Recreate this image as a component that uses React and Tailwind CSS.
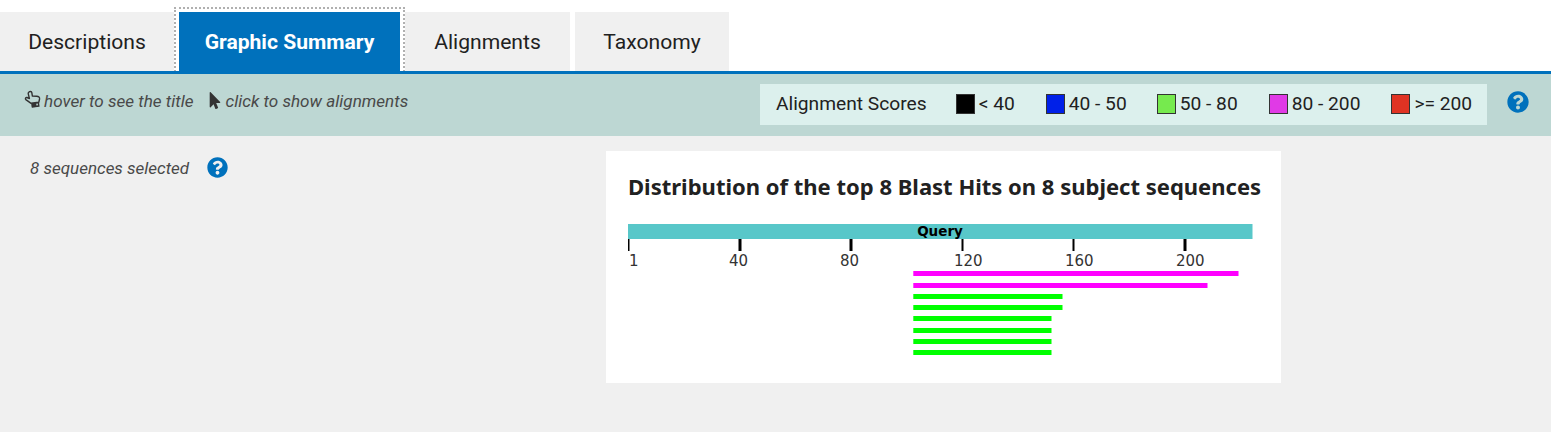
import React from "react";
import { FaMousePointer, FaQuestionCircle } from "react-icons/fa";

const tabs = [
  { label: "Descriptions", width: "w-[174px]" },
  { label: "Graphic Summary", width: "w-[221px]", active: true },
  { label: "Alignments", width: "w-[165px]" },
  { label: "Taxonomy", width: "w-[154px]" },
];

const legend = [
  { label: "< 40", color: "bg-[#000000]", gap: "ml-[29px]" },
  { label: "40 - 50", color: "bg-[#0020e8]", gap: "ml-[31px]" },
  { label: "50 - 80", color: "bg-[#76ea4e]", gap: "ml-[30px]" },
  { label: "80 - 200", color: "bg-[#e03ae6]", gap: "ml-[31px]" },
  { label: ">= 200", color: "bg-[#e03323]", gap: "ml-[31px]" },
];

const ticks = [
  { x: 628.5, w: 2, label: "1", lx: 629 },
  { x: 740, w: 3, label: "40", lx: 729 },
  { x: 851, w: 3, label: "80", lx: 840 },
  { x: 962.5, w: 2, label: "120", lx: 954 },
  { x: 1073.5, w: 2, label: "160", lx: 1065 },
  { x: 1185, w: 3, label: "200", lx: 1176 },
];

const hits = [
  { y: 271, end: 1238.5, color: "#ff00ff" },
  { y: 283, end: 1207.5, color: "#ff00ff" },
  { y: 294, end: 1062.5, color: "#00ff00" },
  { y: 305, end: 1062.5, color: "#00ff00" },
  { y: 316, end: 1051.5, color: "#00ff00" },
  { y: 328, end: 1051.5, color: "#00ff00" },
  { y: 339, end: 1051.5, color: "#00ff00" },
  { y: 350, end: 1051.5, color: "#00ff00" },
];

function HandIcon() {
  return (
    <svg width="18" height="18" viewBox="0 0 18 18" className="mt-[1px] shrink-0 -rotate-[8deg]">
      <path
        d="M6 1.5C7 .7 8.6 1.2 8.7 2.6L8.8 6l4.2.8c2 .4 3 1.5 2.5 3.1L14.3 13H6.5L1.8 8.6c-.8-.9.2-2.4 1.5-1.9L5.5 8 5 3C5 2.4 5.4 1.9 6 1.5Z"
        fill="none"
        stroke="#333"
        strokeWidth="1.4"
        strokeLinejoin="round"
      />
      <rect x="6.5" y="13" width="8" height="4.5" rx="0.5" fill="#333" />
      <rect x="11.5" y="14.2" width="1.6" height="1.6" fill="#bdd7d3" />
    </svg>
  );
}

function AlignmentChart() {
  // coordinates are page pixels, shifted by the chart's left and top edge
  const ox = 628;
  const oy = 223;
  return (
    <svg width="626" height="135" viewBox="0 0 626 135" className="block">
      <rect x="-0.5" y="1" width="625" height="15" fill="#58c7c9" />
      <text x="312" y="13" textAnchor="middle" fontFamily="'DejaVu Sans', sans-serif" fontWeight="700" fontSize="13.5" fill="#000">
        Query
      </text>
      {ticks.map((t) => (
        <g key={t.label}>
          <rect x={t.x - ox - t.w / 2} y="16" width={t.w} height="12" fill="#000" />
          <text x={t.lx - ox} y="43" fontFamily="'DejaVu Sans', sans-serif" fontSize="15" fill="#333">
            {t.label}
          </text>
        </g>
      ))}
      {hits.map((h) => (
        <rect key={h.y} x={913.3 - ox} y={h.y - oy} width={h.end - 913.3} height="5" fill={h.color} />
      ))}
    </svg>
  );
}

export default function App() {
  return (
    <div className="h-[432px] w-[1551px] overflow-hidden bg-white font-['Roboto',sans-serif]">
      <div className="flex h-[71px] items-end gap-[5px] pt-[12px]">
        {tabs.map((tab) => (
          <div
            key={tab.label}
            className={`flex h-[59px] items-center justify-center pt-[1px] text-[21.1px] ${tab.width} ${
              tab.active
                ? "bg-[#0071bc] font-bold text-white outline-2 outline-dotted outline-offset-3 outline-[#b0b0b0]"
                : "bg-[#f0f0f0] text-[#212121]"
            }`}
          >
            {tab.label}
          </div>
        ))}
      </div>

      <div className="relative flex h-[65px] border-t-[3px] border-[#0071bc] bg-[#bdd7d3]">
        <div className="flex items-start pl-[24px] pt-[15px] text-[17.1px] italic text-[#494949]">
          <HandIcon />
          <span className="ml-[2px]">hover to see the title</span>
          <FaMousePointer className="ml-[16px] mt-[3px] h-[17px] w-[12px] text-[#333]" />
          <span className="ml-[4px]">click to show alignments</span>
        </div>
        <div className="ml-auto flex items-start">
          <div className="mt-[10px] flex h-[41px] w-[727px] items-center bg-[#dcf0ed] pl-[16px] pb-[1px] text-[19.2px] text-[#212121]">
            <span>Alignment Scores</span>
            {legend.map((item) => (
              <div key={item.label} className={`flex items-center ${item.gap}`}>
                <span className={`h-[20px] w-[19px] border border-[#333] ${item.color}`} />
                <span className="ml-[4px]">{item.label}</span>
              </div>
            ))}
          </div>
          <FaQuestionCircle className="ml-[20px] mr-[22px] mt-[17px] h-[22px] w-[22px] text-[#0071bc]" />
        </div>
      </div>

      <div className="flex h-[296px] items-start bg-[#f0f0f0] pt-[15px]">
        <div className="flex w-[606px] items-center pl-[30px] pt-[5px] text-[17px] italic text-[#494949]">
          <span>8 sequences selected</span>
          <FaQuestionCircle className="ml-[18px] -mt-[3px] h-[21px] w-[21px] text-[#0071bc]" />
        </div>
        <div className="h-[232px] w-[675px] bg-white pl-[22px] pt-[19px]">
          <h2 className="font-['Noto_Sans',sans-serif] text-[22px] font-bold leading-[32px] whitespace-nowrap text-[#212121]">
            Distribution of the top 8 Blast Hits on 8 subject sequences
          </h2>
          <div className="mt-[21px]">
            <AlignmentChart />
          </div>
        </div>
      </div>
    </div>
  );
}
